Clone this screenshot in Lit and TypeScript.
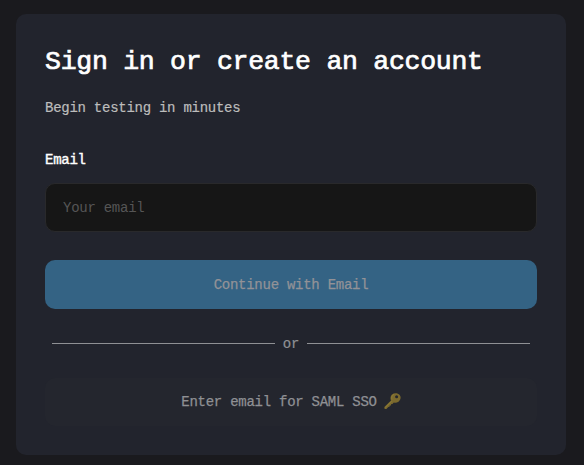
import { LitElement, html, css } from "lit";
import { customElement } from "lit/decorators.js";

@customElement("key-icon")
class KeyIcon extends LitElement {
  static styles = css`
    :host { display: block; width: 17px; height: 17px; margin-bottom: 2px; }
    svg { display: block; }
  `;
  render() {
    return html`<svg width="17" height="17" viewBox="0 0 17 17" aria-hidden="true">
      <path fill="#7c6a2e" d="M8 1.4C10.2-.4 14-.1 15.7 1.9c1.7 2.2.9 5.3-1.2 6.8-1.5 1.1-3.2 1.2-4.7.8L8.4 11l-1.2.1-.2 1.3-1.3.2-.2 1.2-1.2.2-1.9 1.9-1.8.1-.2-2.1L7 7.6C6.1 5.5 6.4 2.9 8 1.4Z"/>
      <path fill="none" stroke="#918039" stroke-width=".8" d="M8 6.6C7.2 4.6 8 2.4 9.8 1.5M7.6 8.2 1.2 14.6"/>
      <circle cx="12.6" cy="3.8" r="1.5" fill="#24262e"/>
    </svg>`;
  }
}

@customElement("app-root")
class AppRoot extends LitElement {
  static styles = css`
    :host {
      display: block;
      box-sizing: border-box;
      height: 465px;
      padding: 14px 18px 10px 16px;
      background: #1a1a1e;
      font: 14px/20px "Liberation Mono", monospace;
      letter-spacing: -0.26px;
      color: #8f9094;
    }
    .card {
      box-sizing: border-box;
      height: 441px;
      padding: 30px 29px 28px;
      border-radius: 10px;
      background: #22242d;
      display: flex;
      flex-direction: column;
    }
    h1 {
      margin: 0;
      font-size: 26.5px;
      line-height: 37px;
      font-weight: 400;
      letter-spacing: -0.27px;
      color: #fff;
      -webkit-text-stroke: 0.7px #fff;
      white-space: nowrap;
    }
    .intro { margin: 17px 0 0; color: #bdbdbc; -webkit-text-stroke: 0.2px; }
    label { margin-top: 32px; color: #fff; -webkit-text-stroke: 0.4px #fff; }
    input {
      box-sizing: border-box;
      width: 100%;
      height: 49px;
      margin: 13px 0 0;
      padding: 0 17px;
      border: 1px solid #29292b;
      border-radius: 10px;
      outline: none;
      background: #161616;
      font: inherit;
      letter-spacing: inherit;
      color: #fff;
    }
    input::placeholder { color: #555; opacity: 1; }
    button {
      display: flex;
      align-items: center;
      justify-content: center;
      width: 100%;
      height: 49px;
      margin: 0;
      padding: 0;
      border: 0;
      border-radius: 10px;
      font: inherit;
      letter-spacing: inherit;
      -webkit-text-stroke: 0.25px;
    }
    .continue { margin-top: 28px; background: #346384; color: #929297; }
    .divider {
      display: flex;
      align-items: center;
      gap: 8px;
      height: 20px;
      margin: 24px 7px 0;
      -webkit-text-stroke: 0.2px;
    }
    .or { padding-top: 2px; }
    .line { flex: 1; height: 1px; background: #8f9094; }
    .sso { height: 48px; margin-top: 25px; background: #24262e; color: #8f9094; gap: 7px; }
  `;

  render() {
    return html`
      <main class="card">
        <h1>Sign in or create an account</h1>
        <p class="intro">Begin testing in minutes</p>
        <label for="email">Email</label>
        <input id="email" type="email" placeholder="Your email" />
        <button class="continue" disabled>Continue with Email</button>
        <div class="divider"><span class="line"></span><span class="or">or</span><span class="line"></span></div>
        <button class="sso" disabled><span>Enter email for SAML SSO</span><key-icon></key-icon></button>
      </main>
    `;
  }
}
